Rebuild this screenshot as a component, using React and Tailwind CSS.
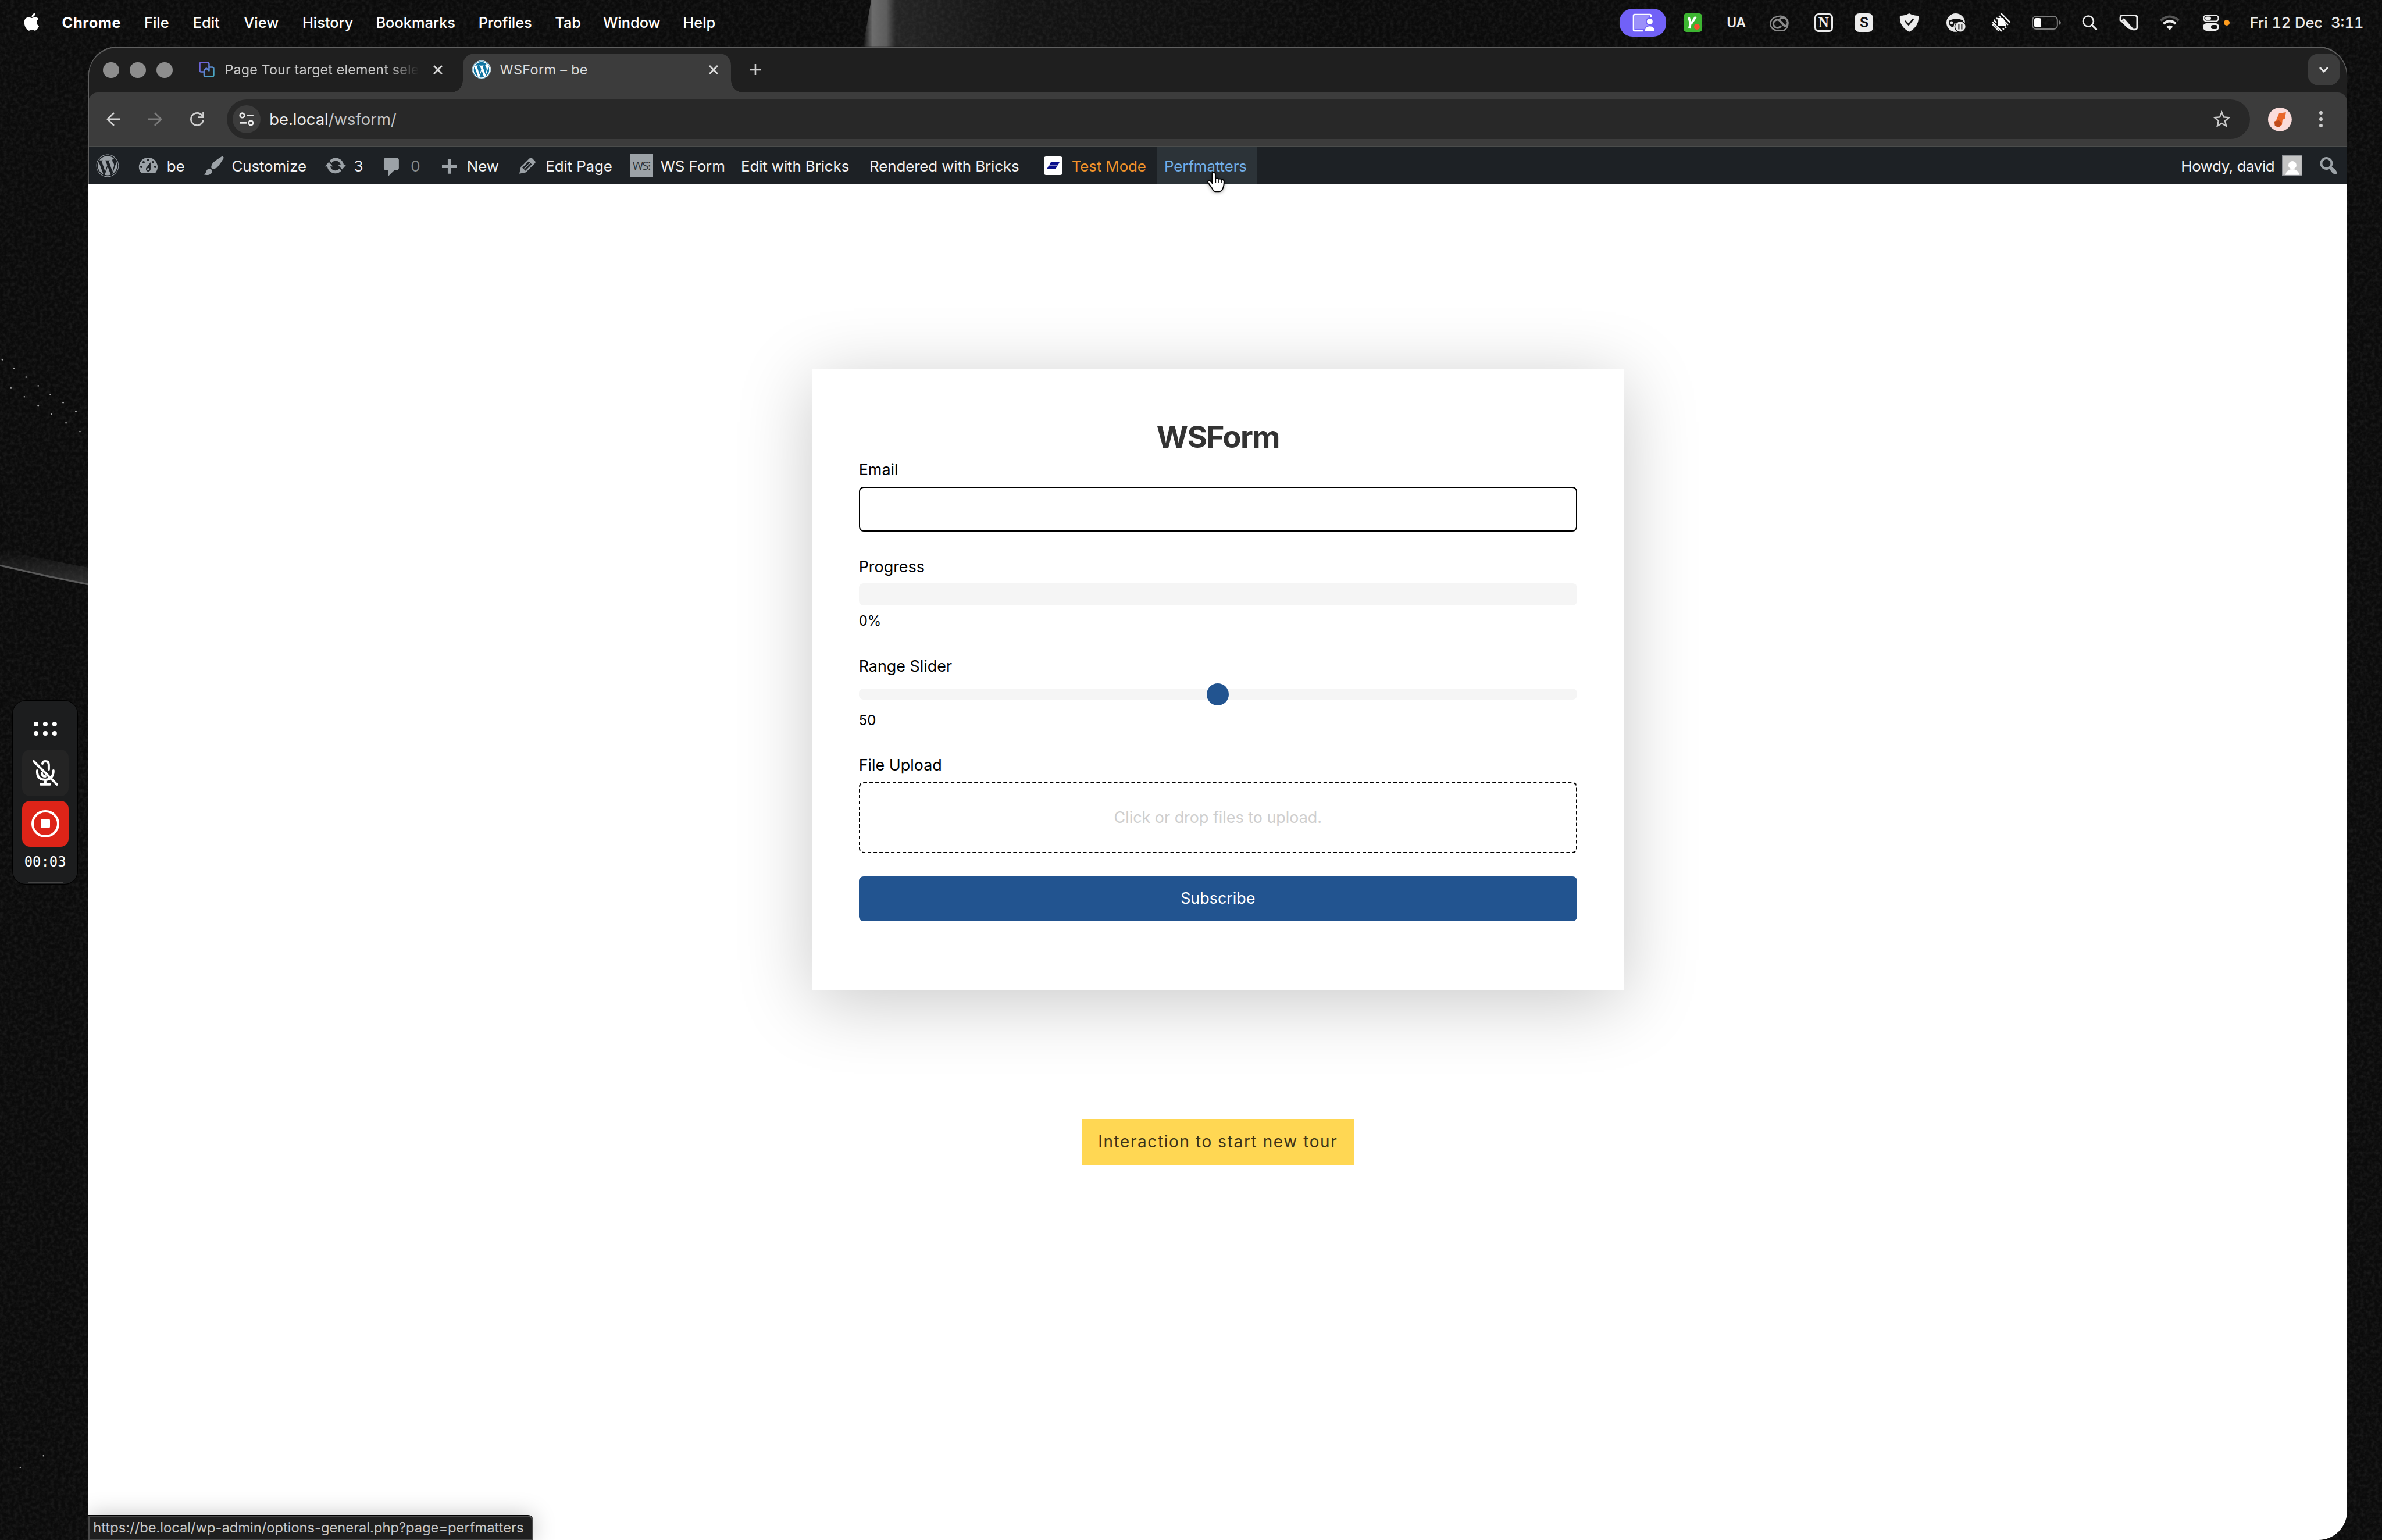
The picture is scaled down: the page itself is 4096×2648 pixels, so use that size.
import { FaApple, FaWordpress } from 'react-icons/fa'
import { MdStarBorder } from 'react-icons/md'

const dash = {
  dashboard: 'M3.76 16h12.48A7.998 7.998 0 0 0 10 3a7.998 7.998 0 0 0-6.24 13zM10 4c.55 0 1 .45 1 1s-.45 1-1 1-1-.45-1-1 .45-1 1-1zM6 6c.55 0 1 .45 1 1s-.45 1-1 1-1-.45-1-1 .45-1 1-1zm8 0c.55 0 1 .45 1 1s-.45 1-1 1-1-.45-1-1 .45-1 1-1zm-5.37 5.55L12 7v6c0 1.1-.9 2-2 2s-2-.9-2-2c0-.57.24-1.08.63-1.45zM4 10c.55 0 1 .45 1 1s-.45 1-1 1-1-.45-1-1 .45-1 1-1zm12 0c.55 0 1 .45 1 1s-.45 1-1 1-1-.45-1-1 .45-1 1-1zm-5 3c0-.55-.45-1-1-1s-1 .45-1 1 .45 1 1 1 1-.45 1-1z',
  brush: 'M18.33 3.57s.27-.8-.31-1.36c-.53-.52-1.22-.24-1.22-.24-.61.3-5.76 3.47-7.67 5.57-.86.96-2.06 3.79-1.09 4.82.92.98 3.96-.17 4.79-1 2.06-2.06 5.21-7.17 5.5-7.79zM1.4 17.65c2.37-1.56 1.46-3.41 3.23-4.64.93-.65 2.22-.62 3.08.29.63.67.8 2.57-.16 3.46-1.57 1.45-4 1.55-6.15.89z',
  update: 'M10.2 3.28c3.53 0 6.43 2.61 6.92 6h2.08l-3.5 4-3.5-4h2.32c-.45-1.97-2.21-3.45-4.32-3.45-1.45 0-2.73.71-3.54 1.78L4.95 5.66C6.23 4.2 8.11 3.28 10.2 3.28zm-.4 13.44c-3.52 0-6.43-2.61-6.92-6H.8l3.5-4c1.17 1.33 2.33 2.67 3.5 4H5.48c.45 1.97 2.21 3.45 4.32 3.45 1.45 0 2.73-.71 3.54-1.78l1.71 1.95c-1.28 1.46-3.15 2.38-5.25 2.38z',
  comment: 'M5 3h9c1.1 0 2 .9 2 2v7c0 1.1-.9 2-2 2h-2l-5 5v-5H5c-1.1 0-2-.9-2-2V5c0-1.1.9-2 2-2z',
  plus: 'M17 9v3h-5v5H9v-5H4V9h5V4h3v5h5z',
  edit: 'M13.89 3.39l2.71 2.72c.46.46.42 1.24.03 1.64l-8.01 8.02-5.56 1.16 1.16-5.58s7.6-7.63 7.99-8.03c.39-.39 1.22-.39 1.68.07zm-2.73 2.79l-5.59 5.61 1.11 1.11 5.54-5.65zm-2.97 8.23l5.58-5.6-1.07-1.08-5.59 5.6z',
  search: 'M12.14 4.18c1.87 1.87 2.11 4.75.72 6.89.12.1.22.21.36.31.2.16.47.36.81.59.34.24.56.39.66.47.42.31.73.57.94.78.32.32.6.65.84 1 .25.35.44.69.59 1.04.14.35.21.68.18 1-.02.32-.14.59-.36.81s-.49.34-.81.36c-.31.02-.65-.04-.99-.19-.35-.14-.7-.34-1.04-.59-.35-.24-.68-.52-1-.84-.21-.21-.47-.52-.77-.93-.1-.13-.25-.35-.47-.66-.22-.32-.4-.57-.56-.78-.16-.2-.29-.35-.44-.5-2.07 1.09-4.69.76-6.44-.98-2.14-2.15-2.14-5.64 0-7.78 2.15-2.15 5.63-2.15 7.78 0zm-1.41 6.36c1.36-1.37 1.36-3.58 0-4.95-1.37-1.37-3.59-1.37-4.95 0-1.37 1.37-1.37 3.58 0 4.95 1.36 1.37 3.58 1.37 4.95 0z',
}

const specks = [
  [4, 621], [24, 636], [45, 651], [66, 666], [87, 681], [109, 695], [131, 710],
  [19, 670], [42, 685], [66, 700], [89, 715], [114, 730], [138, 745],
  [75, 2513], [35, 2533],
]

function Dashicon({ name }) {
  return (
    <svg viewBox="0 0 20 20" className="w-[40px] h-[40px] shrink-0 fill-[#9ca2a7]">
      <path d={dash[name]} />
    </svg>
  )
}

function Wallpaper() {
  return (
    <svg className="absolute inset-0 w-[4112px] h-[2660px]" viewBox="0 0 4112 2660">
      <defs>
        <filter id="grain" x="0" y="0" width="100%" height="100%">
          <feTurbulence type="fractalNoise" baseFrequency="0.16" numOctaves="3" seed="4" />
          <feColorMatrix values="0 0 0 0 1  0 0 0 0 1  0 0 0 0 1  0.6 0 0 0 -0.22" />
        </filter>
        <linearGradient id="beam" x1="0" x2="1" y1="0" y2="0">
          <stop offset="0" stopColor="#777" stopOpacity="0" />
          <stop offset="0.02" stopColor="#777" stopOpacity="0.9" />
          <stop offset="0.05" stopColor="#6a6a6a" stopOpacity="0.85" />
          <stop offset="0.07" stopColor="#555" stopOpacity="0.35" />
          <stop offset="0.3" stopColor="#555" stopOpacity="0.12" />
          <stop offset="1" stopColor="#555" stopOpacity="0" />
        </linearGradient>
        <linearGradient id="ridge" x1="0" y1="0" x2="0" y2="1">
          <stop offset="0" stopColor="#555" stopOpacity="0" />
          <stop offset="1" stopColor="#555" stopOpacity="0.5" />
        </linearGradient>
      </defs>
      <rect width="4112" height="2660" fill="#0b0b0b" />
      <rect width="4112" height="2660" filter="url(#grain)" opacity="0.22" />
      <path d="M1504 0H2300V80H1490Z" fill="url(#beam)" />
      <path d="M0 950L153 980V1010Q76 994 0 977Z" fill="url(#ridge)" />
      <path d="M0 976Q76 994 153 1009" stroke="#5a5a5a" strokeWidth="3" fill="none" />
      {specks.map(([x, y]) => (
        <circle key={x + '-' + y} cx={x} cy={y} r="1.3" fill="#aaa" />
      ))}
    </svg>
  )
}

function MenuBar() {
  return (
    <div className="h-[80px] pb-[1px] flex items-center text-white text-[25.5px] font-medium whitespace-nowrap">
      <FaApple className="w-[27px] h-[35px] ml-[41px] mr-[39px] -mt-[4px]" />
      <span className="w-[142px] font-bold tracking-[0.6px]">Chrome</span>
      <span className="w-[84px]">File</span>
      <span className="w-[88px]">Edit</span>
      <span className="w-[101px]">View</span>
      <span className="w-[127px]">History</span>
      <span className="w-[177px]">Bookmarks</span>
      <span className="w-[132px]">Profiles</span>
      <span className="w-[83px]">Tab</span>
      <span className="w-[138px]">Window</span>
      <span>Help</span>
      <StatusIcons />
    </div>
  )
}

function StatusIcons() {
  return (
    <div className="ml-auto w-[1316px] flex items-center text-[#ececec]">
      <div className="w-[80px] h-[48px] rounded-[22px] bg-[#7161f7] flex items-center justify-center">
        <svg width="40" height="36" viewBox="0 0 40 36" fill="none">
          <path d="M20 32H6Q4 32 4 30V6Q4 4 6 4H32Q34 4 34 6V9" stroke="#fff" strokeWidth="2.6" />
          <rect x="7" y="7" width="24" height="22" fill="#9b90fa" />
          <circle cx="32" cy="16" r="6" fill="#fff" stroke="#7161f7" strokeWidth="2" />
          <path d="M23 33Q23 23.5 32 23.5T41 33Z" fill="#fff" stroke="#7161f7" strokeWidth="1.5" />
        </svg>
      </div>
      <svg className="ml-[30px]" width="32" height="32" viewBox="0 0 32 32">
        <rect width="32" height="32" rx="5" fill="#3db531" />
        <path d="M9 7L12 17L10 26M21 6L13 18" stroke="#fff" strokeWidth="4" fill="none" />
        <circle cx="23" cy="23" r="5" fill="#f5502f" />
      </svg>
      <span className="ml-[43px] w-[33px] text-[23px] font-semibold tracking-[-0.2px]">UA</span>
      <svg className="ml-[40px]" width="39" height="30" viewBox="0 0 39 30" fill="none" stroke="#8b8b8b">
        <path d="M13 28.5H25.5A13 13 0 1 0 13 5.2A11.7 11.7 0 0 0 13 28.5Z" strokeWidth="2.4" />
        <path d="M20.5 20.5A7 7 0 1 1 17 10.5Q19 11.500 27.500 20.500M18.500 9A8 8 0 1 1 30 20.200Q26.500 21.500 24 18.500L18 12" strokeWidth="3.2" />
      </svg>
      <div className="ml-[39px] w-[32px] h-[32px] rounded-[7px] border-[3.1px] border-[#ececec] flex items-center justify-center font-['Liberation_Serif',serif] font-bold text-[25px] leading-none">N</div>
      <div className="ml-[38px] w-[32px] h-[32px] rounded-[8px] bg-[#ececec] text-[#111] flex items-center justify-center text-[24px] font-semibold leading-none">S</div>
      <svg className="ml-[45px]" width="34" height="32" viewBox="0 0 34 32">
        <path d="M17 0Q24 4 33 4Q35 22 17 32Q-1 22 1 4Q10 4 17 0Z" fill="#ececec" />
        <path d="M10 13L16 19.5L24.5 9" stroke="#111" strokeWidth="2.6" fill="none" />
      </svg>
      <svg className="ml-[47px]" width="34" height="32" viewBox="0 0 34 32">
        <circle cx="16" cy="16" r="16" fill="#e8e8e8" />
        <path d="M4 13Q16 6 29 12V16H14L12 24Q3 22 4 13Z" fill="#111" />
        <circle cx="9" cy="16" r="2.5" fill="#e8e8e8" />
        <circle cx="24" cy="23" r="9.5" fill="#e8e8e8" stroke="#111" strokeWidth="1.5" />
        <path d="M21.5 18.5V27.5M26.5 18.5V27.5" stroke="#111" strokeWidth="2" />
      </svg>
      <svg className="ml-[44px]" width="32" height="32" viewBox="0 0 32 32" stroke="#f2f2f2" strokeWidth="2.4">
        <path d="M16 0L32 16M12 4L16 8M20 12L28 20M1 15L17 31M4 12L8 16M5 11L4 12M1 19L12 30M19 26L21 28M23 23L25 25M8 8L10 10" fill="none" />
        <path d="M11 8H20L25 21H11Z" fill="#fff" stroke="none" />
      </svg>
      <svg className="ml-[38px]" width="50" height="24" viewBox="0 0 50 24">
        <rect x="1" y="1" width="43" height="22" rx="6.5" fill="none" stroke="#7d7d7d" strokeWidth="2" />
        <rect x="4" y="4" width="12" height="16" rx="3.5" fill="#fff" />
        <path d="M46.5 8Q50 9 50 12T46.5 16Z" fill="#7d7d7d" />
      </svg>
      <svg className="ml-[36px]" width="28" height="26" viewBox="0 0 28 26" fill="none" stroke="#ececec" strokeLinecap="round">
        <circle cx="11" cy="10.5" r="9" strokeWidth="2.6" />
        <path d="M17.5 17.5L24.5 24.5" strokeWidth="3.3" />
      </svg>
      <svg className="ml-[36px]" width="33" height="28" viewBox="0 0 33 28">
        <path d="M2 10V5.5Q2 1.5 6 1.5H27Q31 1.5 31 5.5V22Q31 26 27 26H24L8 8Q6 12 2 10Z" fill="none" stroke="#ececec" strokeWidth="2.8" strokeLinejoin="round" />
        <path d="M3 12Q8 14 8 9L23 26Q16 26 12 21Z" fill="#ececec" />
      </svg>
      <svg className="ml-[38px]" width="34" height="26" viewBox="0 0 34 26" fill="none" strokeWidth="4.2">
        <path d="M1.5 9.5Q8.5 2.5 17 2.5T32.5 9.5" stroke="#555" />
        <path d="M6.5 15Q11 10.5 17 10.5T27.5 15" stroke="#ececec" />
        <path d="M11.5 20Q17 15.5 22.5 20L17 26Z" fill="#ececec" stroke="none" />
      </svg>
      <svg className="ml-[40px]" width="28" height="28" viewBox="0 0 28 28">
        <rect x="1.2" y="1.2" width="25.6" height="10.6" rx="5.3" fill="none" stroke="#ececec" strokeWidth="2.4" />
        <rect x="4" y="3.5" width="10" height="6" rx="3" fill="#ececec" />
        <rect y="15" width="28" height="13" rx="6.5" fill="#ececec" />
        <rect x="14" y="18" width="11" height="7" rx="3.5" fill="#111" />
      </svg>
      <div className="ml-[8px] w-[10px] h-[10px] rounded-full bg-[#ff9d1e]" />
      <span className="ml-[35px] w-[140px] tabular-nums">Fri 12 Dec</span>
      <span className="tabular-nums">3:11</span>
    </div>
  )
}

function CloseX() {
  return (
    <svg width="16" height="16" viewBox="0 0 16 16" className="shrink-0 stroke-[#dadada]" strokeWidth="2.8">
      <path d="M1 1L15 15M15 1L1 15" />
    </svg>
  )
}

function TabStrip() {
  return (
    <div className="h-[80px] bg-[#1f1f1f] flex items-start text-[#c9c9c9] text-[23.5px] whitespace-nowrap">
      <div className="flex gap-[18px] ml-[25px] mt-[27px]">
        <div className="w-[28px] h-[28px] rounded-full bg-[#8d8d8d]" />
        <div className="w-[28px] h-[28px] rounded-full bg-[#8d8d8d]" />
        <div className="w-[28px] h-[28px] rounded-full bg-[#8d8d8d]" />
      </div>
      <div className="h-[56px] mt-[12px] ml-[45px] w-[457px] flex items-center">
        <svg width="27" height="27" viewBox="0 0 27 27" fill="none" strokeWidth="2.6" strokeLinejoin="round">
          <defs>
            <linearGradient id="fav" x1="0" y1="0" x2="1" y2="1">
              <stop offset="0.2" stopColor="#6d63d9" />
              <stop offset="0.9" stopColor="#4aa9c4" />
            </linearGradient>
          </defs>
          <path d="M8 17.5H4Q1.5 17.5 1.5 15V4Q1.5 1.5 4 1.5H15Q17.5 1.5 17.5 4V15.5L13 11.5Q9 14 9 17V23Q9 25.5 11.5 25.5H23Q25.5 25.5 25.5 23V12Q25.5 9.5 23 9.5H18" stroke="url(#fav)" />
        </svg>
        <span className="ml-[18px] w-[342px] tracking-[0.1px] [mask-image:linear-gradient(to_right,#000_83%,transparent_98%)]">Page Tour target element sele</span>
        <span className="ml-[18px] flex"><CloseX /></span>
      </div>
      <div className="relative h-[68px] mt-[12px] w-[463px] -ml-[1px] rounded-t-[20px] bg-[#3c3c3c] pb-[12px] flex items-center text-[#dcdcdc]">
        {/* Flared bottom corners of the active tab */}
        <div className="absolute -left-[20px] bottom-0 w-[20px] h-[20px] bg-[radial-gradient(circle_at_top_left,transparent_19.5px,#3c3c3c_20px)]" />
        <div className="absolute -right-[20px] bottom-0 w-[20px] h-[20px] bg-[radial-gradient(circle_at_top_right,transparent_19.5px,#3c3c3c_20px)]" />
        <FaWordpress className="ml-[16px] w-[32px] h-[32px] rounded-full bg-white text-[#0f75a3]" />
        <span className="ml-[16px] tracking-[0.35px]">WSForm – be</span>
        <span className="ml-auto mr-[22px]"><CloseX /></span>
      </div>
      <svg className="ml-[32px] mt-[30px] stroke-[#cfcfcf]" width="20" height="20" viewBox="0 0 20 20" strokeWidth="2.6">
        <path d="M10 0V20M0 10H20" />
      </svg>
      <div className="ml-auto mr-[12px] mt-[12px] w-[56px] h-[56px] rounded-[20px] bg-[#3c3c3c] flex items-center justify-center">
        <svg width="16" height="10" viewBox="0 0 16 10" fill="none" stroke="#e6e6e6" strokeWidth="3">
          <path d="M1 1L8 8L15 1" />
        </svg>
      </div>
    </div>
  )
}

function Toolbar() {
  return (
    <div className="bg-[#1f1f1f]">
      <div className="h-[94px] rounded-t-[16px] bg-[#3c3c3c] border-b-[2.1px] border-[#4b4d4c] flex items-center">
        <svg className="ml-[31px]" width="24" height="24" viewBox="0 0 24 24" fill="none" stroke="#d0d0d0" strokeWidth="2.7">
          <path d="M13 1L2 12L13 23M2 12H24" />
        </svg>
        <svg className="ml-[48px]" width="24" height="24" viewBox="0 0 24 24" fill="none" stroke="#7b7b7b" strokeWidth="2.7">
          <path d="M11 1L22 12L11 23M22 12H0" />
        </svg>
        <svg className="ml-[48px]" width="24" height="24" viewBox="0 0 24 24" fill="none" stroke="#d0d0d0" strokeWidth="2.7">
          <path d="M22.5 13.5A10.6 10.6 0 1 1 20 5L22 8M22.6 0V8.6H14" />
        </svg>
        <div className="ml-[40px] w-[3492px] h-[68px] rounded-full bg-[#282828] flex items-center text-[27.5px] text-[#c4c4c4]">
          <div className="ml-[10px] w-[48px] h-[48px] rounded-full bg-[#3c3c3c] flex items-center justify-center">
            <svg width="26" height="24" viewBox="0 0 26 24" fill="none" stroke="#e8e8e8" strokeWidth="2.7">
              <circle cx="5.5" cy="5.5" r="3.8" />
              <path d="M13.5 5.5H25M2 18.5H13" />
              <circle cx="20.5" cy="18.5" r="3.8" />
            </svg>
          </div>
          <span className="ml-[15px] pt-[1px] whitespace-nowrap"><b className="font-normal text-[#ececec]">be.local</b>/wsform/</span>
          <MdStarBorder className="ml-auto mr-[30px] w-[37px] h-[37px] text-[#c8c8c8]" />
        </div>
        <svg className="ml-[31px]" width="41" height="41" viewBox="0 0 41 41">
          <circle cx="20.5" cy="20.5" r="20.5" fill="#fbdcda" />
          <path d="M14 22L19 10L31 8L29 19L25 21L24 30L19 34L12 32L11 24Z" fill="#e9672a" />
          <path d="M11 24L19 22L24 27L19 34L12 32Z" fill="#bf4a1a" />
        </svg>
        <svg className="ml-[47px] fill-[#cfcfcf]" width="8" height="28" viewBox="0 0 8 28">
          <circle cx="4" cy="3" r="3" />
          <circle cx="4" cy="14" r="3" />
          <circle cx="4" cy="25" r="3" />
        </svg>
      </div>
    </div>
  )
}

function AdminBar() {
  return (
    <div className="relative h-[64px] bg-[#1d2125] flex items-center text-[#f0f0f1] text-[26px] tracking-[-0.1px] whitespace-nowrap [&>span]:pt-[3px]">
      <FaWordpress className="ml-[13px] mr-[30px] w-[40px] h-[40px] text-[#9ca2a7]" />
      <Dashicon name="dashboard" />
      <span className="pl-[12px] w-[73px]">be</span>
      <Dashicon name="brush" />
      <span className="pl-[11px] w-[170px]">Customize</span>
      <Dashicon name="update" />
      <span className="pl-[12px] w-[58px]">3</span>
      <Dashicon name="comment" />
      <span className="pl-[12px] w-[58px] text-[#85898c]">0</span>
      <Dashicon name="plus" />
      <span className="pl-[11px] w-[96px]">New</span>
      <Dashicon name="edit" />
      <span className="pl-[11px] w-[156px]">Edit Page</span>
      <div className="w-[40px] h-[40px] bg-[#9ca2a7] text-[#2c3338] text-[20px] font-['Open_Sans',sans-serif] leading-none tracking-[-1.5px] flex items-center justify-center">WS⁝</div>
      <span className="pl-[13px] w-[152px]">WS Form</span>
      <span className="w-[222px]">Edit with Bricks</span>
      <span className="w-[301px]">Rendered with Bricks</span>
      <svg width="32" height="32" viewBox="0 0 32 32">
        <rect width="32" height="32" rx="4" fill="#fff" />
        <path d="M12 10H27L24 15.5H9ZM8 16.5H23L20 22H5Z" fill="#0a0f8c" />
      </svg>
      <span className="pl-[16px] w-[164px] text-[#f0932b]">Test Mode</span>
      <span className="pl-[12px] w-[172px] h-[64px] leading-[61px] bg-[#2c3338] text-[#72aee6]">Perfmatters</span>
      <span className="ml-auto w-[174px] tracking-[-0.4px]">Howdy, david</span>
      <svg width="36" height="36" viewBox="0 0 36 36" className="mr-[25px]">
        <rect x="1" y="1" width="34" height="34" fill="#c4c4c4" stroke="#8c8f94" strokeWidth="2" />
        <circle cx="18" cy="17" r="7" fill="#fff" />
        <path d="M6 34Q8 24 18 24T30 34Z" fill="#fff" />
      </svg>
      <div className="mr-[12px]"><Dashicon name="search" /></div>
      {/* Pointer */}
      <svg className="absolute left-[1931px] top-[41px] drop-shadow-[0_2px_3px_rgba(0,0,0,0.35)]" width="32" height="38" viewBox="0 0 32 38">
        <path d="M11 2Q8.5 2 8.5 5V21L6 18Q4 15.5 2 17T2 21L9 31Q10 35 14 35.5H21Q25 35 26.5 31Q29 26 29 18Q28.5 14 25 15.5Q23.5 12.5 20 14Q18 11.5 14 13V5Q13.5 2 11 2Z" fill="#fff" stroke="#000" strokeWidth="2" />
        <path d="M14.5 14V20M20 15V20.5M25 16V21" stroke="#000" strokeWidth="1.5" />
      </svg>
    </div>
  )
}

function FormCard() {
  return (
    <div className="w-[1400px] bg-white px-[80px] pt-[89px] pb-[120px] text-[27px] leading-[40px] text-black shadow-[0_20px_120px_rgba(0,0,0,0.22)]">
      <h1 className="text-center text-[53px] leading-[60px] font-bold tracking-[-1.6px] text-[#333]">WSForm</h1>
      <div className="mt-[6px]">Email</div>
      <div className="mt-[9px] h-[78px] rounded-[8px] border-[2.1px] border-black" />
      <div className="mt-[41px]">Progress</div>
      <div className="mt-[8px] h-[38px] rounded-[8px] bg-[#f5f5f5]" />
      <div className="mt-[10px] text-[24px] leading-[34px]">0%</div>
      <div className="mt-[41px]">Range Slider</div>
      <div className="mt-[19px] h-[19px] rounded-[8px] bg-[#f5f5f5] flex items-center justify-center">
        <div className="w-[38px] h-[38px] shrink-0 rounded-full bg-[#225490]" />
      </div>
      <div className="mt-[19px] text-[24px] leading-[34px]">50</div>
      <div className="mt-[40px]">File Upload</div>
      <div className="mt-[9px] h-[123px] rounded-[8px] border-[2.1px] border-dashed border-black flex items-center justify-center text-[#cecece]">Click or drop files to upload.</div>
      <div className="mt-[40px] h-[77px] rounded-[8px] bg-[#225490] text-white flex items-center justify-center">Subscribe</div>
    </div>
  )
}

function Recorder() {
  return (
    <div className="absolute left-[22px] top-[1210px] w-[112px] h-[316px] rounded-[22px] bg-[#1c1d1e] outline-[2px] outline-black flex flex-col items-center pt-[36px]">
      <svg width="40" height="24" viewBox="0 0 40 24" className="fill-white">
        <circle cx="4" cy="4" r="4" />
        <circle cx="20" cy="4" r="4" />
        <circle cx="36" cy="4" r="4" />
        <circle cx="4" cy="20" r="4" />
        <circle cx="20" cy="20" r="4" />
        <circle cx="36" cy="20" r="4" />
      </svg>
      <div className="mt-[24px] w-[80px] h-[80px] rounded-[14px] bg-[#242424] flex items-center justify-center">
        <svg width="44" height="44" viewBox="0 0 44 44" fill="none" stroke="#fff" strokeWidth="4" strokeLinecap="round">
          <path d="M2 2L42 42M17 6Q18 2 22 2Q28 2 28 8V16M16 22Q16 28 22 28M8 18V22Q9 34 22 34Q36 33 36 18M22 34V42M14 42H30" />
        </svg>
      </div>
      <div className="mt-[8px] w-[80px] h-[80px] rounded-[14px] bg-[#de2418] flex items-center justify-center">
        <div className="w-[48px] h-[48px] rounded-full border-[4.1px] border-white flex items-center justify-center">
          <div className="w-[16px] h-[16px] rounded-[3px] bg-white" />
        </div>
      </div>
      <div className="mt-[12px] h-[30px] leading-[30px] font-['DejaVu_Sans_Mono',monospace] text-[24px] text-white">00:03</div>
      <div className="mt-[18px] w-[60px] h-[2px] bg-[#444]" />
    </div>
  )
}

export default function App() {
  return (
    <div className="w-screen h-screen overflow-hidden bg-[#0b0b0b]">
      <div className="relative w-[4112px] h-[2660px] overflow-hidden font-['Inter',sans-serif] [zoom:0.9961]">
        <Wallpaper />
        <div className="relative h-full flex flex-col">
          <MenuBar />
          <div className="relative ml-[153px] w-[3899px] flex-1 mb-[2px] rounded-[50px] overflow-hidden rounded-bl-none bg-white flex flex-col">
            <TabStrip />
            <Toolbar />
            <AdminBar />
            <div className="flex-1 flex flex-col items-center pt-[318px]">
              <FormCard />
              <div className="mt-[222px] w-[470px] h-[80px] bg-[#ffd753] text-[#3d3319] text-[28px] tracking-[1.65px] flex items-center justify-center whitespace-nowrap">Interaction to start new tour</div>
            </div>
            {/* Link status bubble */}
            <div className="absolute left-0 bottom-0 w-[767px] h-[42px] rounded-tr-[8px] bg-[#1f1f1f] border-[2.1px] border-[#4a4a4a] outline-[1.1px] outline-black shadow-[0_0_40px_rgba(0,0,0,0.25)] text-[#c8c8c8] text-[23.8px] leading-[38px] pl-[6px] whitespace-nowrap">https://be.local/wp-admin/options-general.php?page=perfmatters</div>
            <div className="absolute left-0 top-0 w-full h-[238px] rounded-t-[50px] border-x-[1.1px] border-t-[2.1px] border-[#606060]" />
          </div>
        </div>
        <Recorder />
      </div>
    </div>
  )
}
